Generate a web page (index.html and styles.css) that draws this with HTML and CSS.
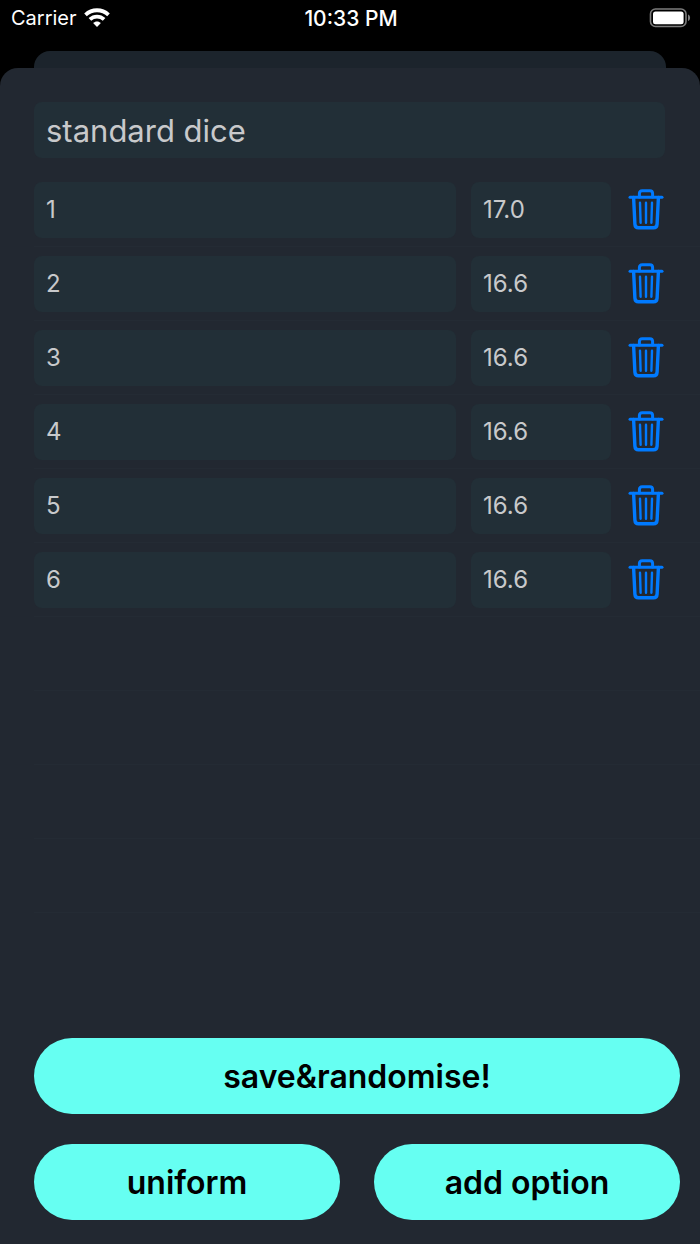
FILE: index.html
```html
<!DOCTYPE html>
<html lang="en">
<head>
    <meta charset="UTF-8">
    <meta name="viewport" content="width=device-width, initial-scale=1.0">
    <title>standard dice</title>
    <link rel="stylesheet" href="styles.css">
</head>
<body>
    <header class="status-bar">
        <div class="carrier">
            <span>Carrier</span>
            <svg width="26" height="20" viewBox="0 0 26 20" fill="none" stroke="#fff" stroke-width="3.8">
                <path d="M1.5 6.8C8 0.7 18 0.7 24.5 6.8"/>
                <path d="M5.9 11.4C10 7.6 16 7.6 20.1 11.4"/>
                <path d="M13 19L9.1 15.1C11.2 13 14.8 13 16.9 15.1Z" fill="#fff" stroke="none"/>
            </svg>
        </div>
        <time class="clock">10:33 PM</time>
        <div class="battery">
            <svg width="42" height="20" viewBox="0 0 42 20">
                <rect x="1.5" y="1" width="35.5" height="17.5" rx="5" fill="none" stroke="#7c7c7c" stroke-width="1.6"/>
                <rect x="4" y="3.6" width="30.6" height="12.6" rx="2.5" fill="#fff"/>
                <path d="M39 6.5C41.8 7.5 41.8 12 39 13Z" fill="#7c7c7c"/>
            </svg>
        </div>
    </header>
    <div class="back-sheet"></div>

    <main class="sheet">
        <input class="field title" type="text" value="standard dice" aria-label="Name">
        <ul class="options" id="options"></ul>
        <div class="actions">
            <button class="wide" type="button">save&amp;randomise!</button>
            <button type="button">uniform</button>
            <button type="button">add option</button>
        </div>
    </main>

    <svg class="symbols" width="0" height="0">
        <symbol id="trash" viewBox="0 0 36 44">
            <g fill="none" stroke="#007aff" stroke-linecap="round" stroke-linejoin="round">
                <path stroke-width="3" d="M2 9.2H34"/>
                <path stroke-width="3" d="M11.4 9V5.6Q11.4 2.8 14.2 2.8H21.8Q24.6 2.8 24.6 5.6V9"/>
                <path stroke-width="3.4" d="M5.6 9.5L6.9 36.2Q7.1 39.8 10.5 39.8H25.5Q28.9 39.8 29.1 36.2L30.4 9.5"/>
                <path stroke-width="2.4" d="M12 14.8L12.6 34.8M18 14.8V34.8M24 14.8L23.4 34.8"/>
            </g>
        </symbol>
    </svg>

    <script>
        const options = [
            ["1", "17.0"],
            ["2", "16.6"],
            ["3", "16.6"],
            ["4", "16.6"],
            ["5", "16.6"],
            ["6", "16.6"],
        ];
        const emptyRows = 4;

        const list = document.getElementById("options");

        for (const [name, weight] of options) {
            list.insertAdjacentHTML("beforeend", `
                <li class="option">
                    <input class="field" type="text" value="${name}" aria-label="Option ${name}">
                    <input class="field weight" type="text" value="${weight}" aria-label="Weight of option ${name}">
                    <button class="delete" type="button" aria-label="Delete option ${name}">
                        <svg width="36" height="44"><use href="#trash"/></svg>
                    </button>
                </li>`);
        }

        // empty rows only show their separator
        for (let i = 0; i < emptyRows; i++) {
            list.insertAdjacentHTML("beforeend", `<li class="option" aria-hidden="true"></li>`);
        }
    </script>
</body>
</html>
```
FILE: styles.css
```css
* {
    box-sizing: border-box;
}

body {
    margin: 0;
    min-height: 100vh;
    display: flex;
    flex-direction: column;
    background: #000;
    font-family: Inter, "Liberation Sans", sans-serif;
}

.status-bar {
    display: grid;
    grid-template-columns: 1fr auto 1fr;
    align-items: center;
    height: 36px;
    margin-bottom: 15px;
    padding: 0 9px 0 11px;
    color: #fff;
    font-size: 20px;
}

.carrier {
    display: flex;
    align-items: center;
    gap: 7px;
}

.clock {
    font-size: 21px;
    font-weight: 500;
}

.battery {
    display: flex;
    justify-content: flex-end;
}

.back-sheet {
    height: 17px;
    margin: 0 34px;
    border-radius: 16px 16px 0 0;
    background: #1c242c;
}

.sheet {
    flex: 1;
    display: flex;
    flex-direction: column;
    padding: 34px 0 24px 34px;
    border-radius: 18px 18px 0 0;
    background: #222831;
}

.field {
    flex: 1;
    min-width: 0;
    height: 56px;
    padding: 0 12px;
    border: none;
    border-radius: 8px;
    background: #222f37;
    color: #c8c9cb;
    font-family: inherit;
    font-size: 24px;
}

.title {
    flex: none;
    margin-right: 35px;
    font-size: 31px;
}

.options {
    margin: 15px 0 0;
    padding: 0;
    list-style: none;
}

.option {
    display: flex;
    align-items: center;
    gap: 15px;
    height: 74px;
    padding-right: 36px;
    border-bottom: 1px solid #242b34;
}

.weight {
    flex: none;
    width: 140px;
}

.delete {
    display: flex;
    padding: 0 0 0 2px;
    border: none;
    background: none;
}

.actions {
    display: grid;
    grid-template-columns: 1fr 1fr;
    gap: 30px 34px;
    margin-top: auto;
    padding-right: 20px;
}

.actions button {
    height: 76px;
    border: none;
    border-radius: 38px;
    background: #66fff2;
    color: #000;
    font-family: inherit;
    font-size: 32px;
    font-weight: 600;
}

.actions .wide {
    grid-column: span 2;
}

.symbols {
    position: absolute;
}
```
